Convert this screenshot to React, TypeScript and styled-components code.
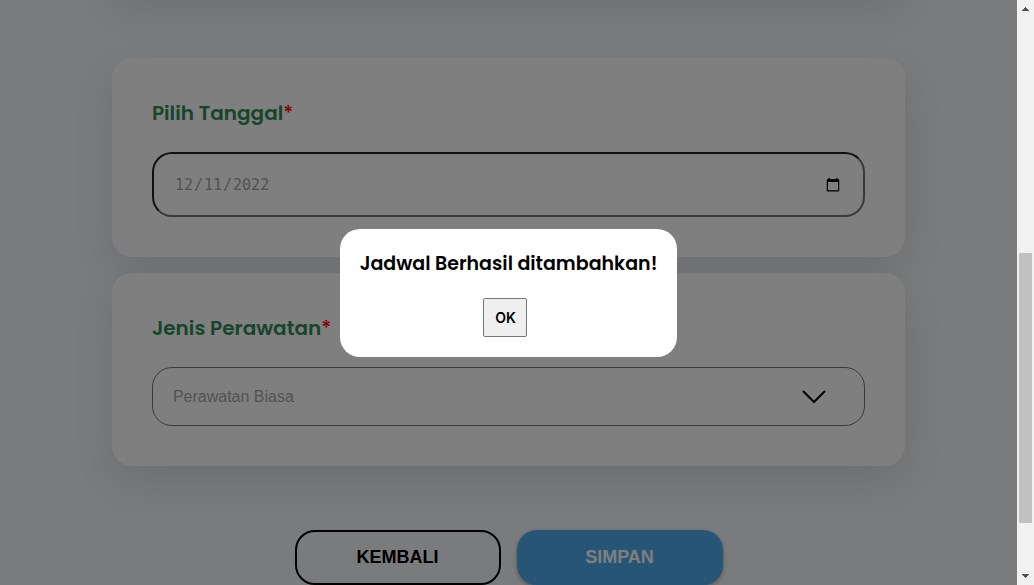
import React from "react";
import styled, { createGlobalStyle } from "styled-components";

const GlobalStyle = createGlobalStyle`
  * { box-sizing: border-box; }
  body {
    margin: 0;
    background: #f3f6f8;
    font-family: Poppins, Inter, sans-serif;
  }
`;

const Shell = styled.div`
  display: grid;
  grid-template-columns: minmax(0, 1fr) 17px;
  height: 100vh;
  overflow: hidden;
`;

const Viewport = styled.div`
  position: relative;
  overflow: hidden;
`;

const Form = styled.form`
  width: 78%;
  margin: -72px auto 0;
`;

const Card = styled.section`
  padding: 40px;
  margin-bottom: 16px;
  border-radius: 20px;
  background: #fff;
  box-shadow: 0 16px 40px rgba(17, 12, 46, 0.1);
`;

const PreviousCard = styled(Card)`
  margin-bottom: 66px;
  padding: 32px;
`;

const Label = styled.label`
  display: block;
  margin-bottom: 24px;
  color: #2e8b57;
  font-size: 20px;
  font-weight: 600;
  line-height: 30px;
`;

const Required = styled.span`
  color: #f00;
  font-weight: 500;
`;

const DateInput = styled.input`
  display: block;
  width: 100%;
  height: 65px;
  padding: 0 20px;
  border: 2px solid;
  border-color: #222 #767676 #767676 #222;
  border-radius: 20px;
  background: #fff;
  color: #a4a4a4;
  font: 15px "DejaVu Sans Mono", monospace;

  &::-webkit-calendar-picker-indicator {
    width: 16px;
    height: 16px;
  }
`;

const SelectWrap = styled.div`
  position: relative;
`;

const Select = styled.select`
  display: block;
  appearance: none;
  width: 100%;
  height: 59px;
  padding: 0 20px;
  border: 1px solid #767676;
  border-radius: 20px;
  background: #fff;
  color: #a4a4a4;
  font: 16px "Liberation Sans", Arial, sans-serif;
`;

const Chevron = styled.svg`
  position: absolute;
  top: 22px;
  right: 38px;
  pointer-events: none;
`;

const Actions = styled.div`
  display: flex;
  justify-content: center;
  gap: 16px;
  margin-top: 64px;
`;

const ActionButton = styled.button<{ $primary?: boolean }>`
  width: 206px;
  height: 55px;
  padding: 0;
  border: ${(p) => (p.$primary ? "0" : "2px solid #000")};
  border-radius: 20px;
  background: ${(p) => (p.$primary ? "#4daaec" : "transparent")};
  box-shadow: ${(p) => (p.$primary ? "0 2px 4px rgba(0, 0, 0, 0.3)" : "none")};
  color: ${(p) => (p.$primary ? "#fff" : "#000")};
  font: bold 18px "Liberation Sans", Arial, sans-serif;
`;

const Backdrop = styled.div`
  position: absolute;
  inset: 0;
  display: flex;
  align-items: center;
  justify-content: center;
  background: rgba(0, 0, 0, 0.5);
`;

const Dialog = styled.div`
  display: flex;
  flex-direction: column;
  align-items: center;
  padding: 20px;
  border-radius: 20px;
  background: #fff;
`;

const DialogTitle = styled.h2`
  margin: 0 0 20px;
  font-size: 19px;
  font-weight: 600;
  line-height: 29px;
`;

const OkButton = styled.button`
  width: 44px;
  height: 39px;
  margin-right: 6px;
  padding: 0;
  border: 1px solid #767676;
  border-radius: 2px;
  background: #efefef;
  color: #000;
  font: 600 14px Inter, sans-serif;
`;

const Scrollbar = styled.div`
  display: grid;
  grid-template-rows: 17px 236fr 270fr 45fr 17px;
  background: #f1f1f1;
`;

const Thumb = styled.div`
  grid-row: 3;
  margin: 0 2px;
  background: #c1c1c1;
`;

const Arrow = styled.svg<{ $end?: boolean }>`
  grid-row: ${(p) => (p.$end ? 5 : 1)};
`;

export default function App() {
  return (
    <>
      <GlobalStyle />
      <Shell>
        <Viewport>
          <Form onSubmit={(e) => e.preventDefault()}>
            <PreviousCard />
            <Card>
              <Label htmlFor="tanggal">
                Pilih Tanggal<Required>*</Required>
              </Label>
              <DateInput id="tanggal" type="date" defaultValue="2022-12-11" />
            </Card>
            <Card>
              <Label htmlFor="jenis">
                Jenis Perawatan<Required>*</Required>
              </Label>
              <SelectWrap>
                <Select id="jenis" defaultValue="biasa">
                  <option value="biasa">Perawatan Biasa</option>
                </Select>
                <Chevron width="26" height="16" viewBox="0 0 26 16" fill="none" stroke="#000" strokeWidth="2">
                  <path d="M2 2 L13 13 L24 2" />
                </Chevron>
              </SelectWrap>
            </Card>
            <Actions>
              <ActionButton type="button">KEMBALI</ActionButton>
              <ActionButton type="submit" $primary>
                SIMPAN
              </ActionButton>
            </Actions>
          </Form>
          <Backdrop>
            <Dialog role="dialog" aria-modal="true" aria-labelledby="pesan">
              <DialogTitle id="pesan">Jadwal Berhasil ditambahkan!</DialogTitle>
              <OkButton type="button">OK</OkButton>
            </Dialog>
          </Backdrop>
        </Viewport>
        <Scrollbar aria-hidden="true">
          <Arrow width="17" height="17" shapeRendering="crispEdges">
            <path d="M5 11h7v-1h-1v-1h-1v-1h-1v-1h-1v1h-1v1h-1v1h-1z" fill="#505050" />
          </Arrow>
          <Thumb />
          <Arrow $end width="17" height="17" shapeRendering="crispEdges">
            <path d="M5 6h7v1h-1v1h-1v1h-1v1h-1v-1h-1v-1h-1v-1h-1z" fill="#505050" />
          </Arrow>
        </Scrollbar>
      </Shell>
    </>
  );
}
